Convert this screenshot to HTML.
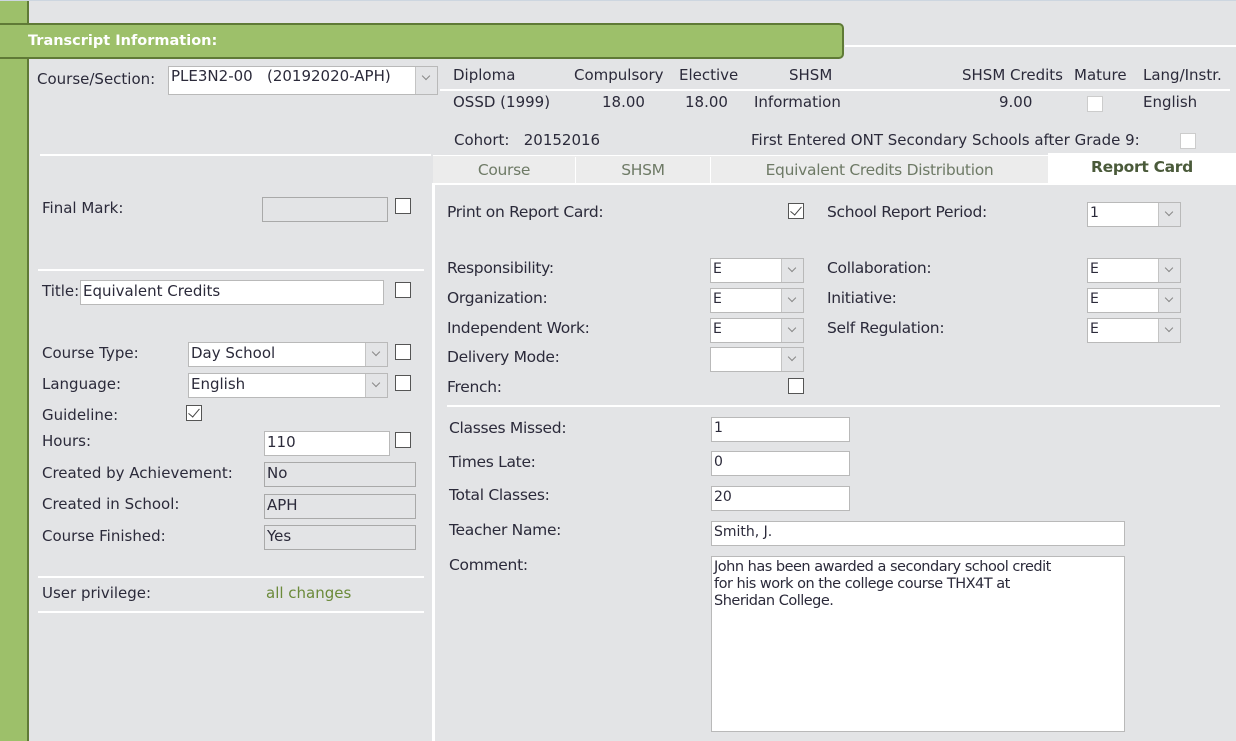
<!DOCTYPE html>
<html><head><meta charset="utf-8"><style>
*{box-sizing:border-box;margin:0;padding:0}
body{width:1236px;height:741px;overflow:hidden;background:#e3e4e6;font-family:"DejaVu Sans","Liberation Sans",sans-serif;font-size:15px;color:#2b2a3a;position:relative}
.a{position:absolute;white-space:nowrap;line-height:18px}
.in{position:absolute;background:#fff;border:1px solid #b9b9b9;font-size:14px;line-height:20px;padding-left:2px;white-space:nowrap;overflow:hidden}
.ro{background:#e3e4e6;border:1px solid #a9a9a9}
.sel .btn{position:absolute;right:0;top:0;bottom:0;width:22px;background:#e3e4e6;border-left:1px solid #c4c4c4}
.sel .btn:after{content:"";position:absolute;left:7px;top:6px;width:5px;height:5px;border-right:1px solid #888;border-bottom:1px solid #888;transform:rotate(45deg)}
.cb{position:absolute;width:16px;height:16px;background:#fff;border:1px solid #555}
.cb.l{border-color:#ccc}
.cb.k:after{content:"";position:absolute;left:4px;top:0px;width:5px;height:10px;border-right:1.5px solid #444;border-bottom:1.5px solid #444;transform:rotate(40deg)}
.hl{position:absolute;height:2px;background:#fff}
.r{font-size:15.5px;letter-spacing:-0.3px}
</style></head><body>
<div style="position:absolute;left:0;top:0;width:29px;height:741px;background:#9dc06a;border-right:2px solid #5f7a36"></div>
<div style="position:absolute;left:0;top:0;width:1236px;height:1px;background:#cdd6e0"></div>
<div style="position:absolute;left:0;top:23px;width:844px;height:36px;background:#9dc06a;border:2px solid #5f7a36;border-left:none;border-radius:0 5px 5px 0"></div>
<div class="a" style="left:28px;top:32px;color:#fff;font-weight:bold;font-size:14.5px">Transcript Information:</div>
<div class="hl" style="left:845px;top:45px;width:391px"></div>

<div class="a" style="left:37px;top:70px">Course/Section:</div>
<div class="in sel" style="left:168px;top:66px;width:270px;height:29px;line-height:18px;font-size:15px">PLE3N2-00&nbsp;&nbsp;&nbsp;(20192020-APH)<span class="btn"></span></div>

<div class="a" style="left:453px;top:66px">Diploma</div>
<div class="a" style="left:574px;top:66px">Compulsory</div>
<div class="a" style="left:679px;top:66px">Elective</div>
<div class="a" style="left:789px;top:66px">SHSM</div>
<div class="a" style="left:962px;top:66px">SHSM Credits</div>
<div class="a" style="left:1074px;top:66px">Mature</div>
<div class="a" style="left:1143px;top:66px">Lang/Instr.</div>
<div class="hl" style="left:440px;top:89px;width:790px"></div>
<div class="a" style="left:453px;top:93px">OSSD (1999)</div>
<div class="a" style="left:602px;top:93px">18.00</div>
<div class="a" style="left:685px;top:93px">18.00</div>
<div class="a" style="left:754px;top:93px">Information</div>
<div class="a" style="left:999px;top:93px">9.00</div>
<div class="cb l" style="left:1087px;top:96px"></div>
<div class="a" style="left:1143px;top:93px">English</div>
<div class="a" style="left:454px;top:131px">Cohort:&nbsp;&nbsp;&nbsp;20152016</div>
<div class="a" style="left:751px;top:131px">First Entered ONT Secondary Schools after Grade 9:</div>
<div class="cb l" style="left:1180px;top:133px"></div>

<div class="hl" style="left:40px;top:154px;width:391px"></div>
<div class="a" style="left:42px;top:199px">Final Mark:</div>
<div class="in ro" style="left:262px;top:197px;width:126px;height:25px"></div>
<div class="cb" style="left:395px;top:198px"></div>
<div class="hl" style="left:38px;top:269px;width:386px"></div>
<div class="a" style="left:42px;top:282px">Title:</div>
<div class="in" style="left:80px;top:280px;width:304px;height:25px;font-size:15px">Equivalent Credits</div>
<div class="cb" style="left:395px;top:282px"></div>
<div class="a" style="left:42px;top:344px">Course Type:</div>
<div class="in sel" style="left:188px;top:342px;width:200px;height:25px;font-size:15px">Day School<span class="btn"></span></div>
<div class="cb" style="left:395px;top:344px"></div>
<div class="a" style="left:42px;top:375px">Language:</div>
<div class="in sel" style="left:188px;top:373px;width:200px;height:25px;font-size:15px">English<span class="btn"></span></div>
<div class="cb" style="left:395px;top:375px"></div>
<div class="a" style="left:42px;top:406px">Guideline:</div>
<div class="cb k" style="left:186px;top:405px"></div>
<div class="a" style="left:42px;top:432px">Hours:</div>
<div class="in" style="left:264px;top:431px;width:126px;height:25px;font-size:15px">110</div>
<div class="cb" style="left:395px;top:432px"></div>
<div class="a" style="left:42px;top:464px">Created by Achievement:</div>
<div class="in ro" style="left:264px;top:462px;width:152px;height:25px;font-size:15px">No</div>
<div class="a" style="left:42px;top:495px">Created in School:</div>
<div class="in ro" style="left:264px;top:494px;width:152px;height:25px;font-size:15px">APH</div>
<div class="a" style="left:42px;top:527px">Course Finished:</div>
<div class="in ro" style="left:264px;top:525px;width:152px;height:25px;font-size:15px">Yes</div>
<div class="hl" style="left:38px;top:576px;width:386px"></div>
<div class="a" style="left:42px;top:584px">User privilege:</div>
<div class="a" style="left:266px;top:584px;color:#6b8a3a">all changes</div>
<div class="hl" style="left:38px;top:611px;width:386px"></div>

<div style="position:absolute;left:433px;top:155px;width:615px;height:28px;background:#ececec;border-top:1px solid #fff"></div>
<div style="position:absolute;left:575px;top:157px;width:1px;height:26px;background:#fff"></div>
<div style="position:absolute;left:710px;top:157px;width:1px;height:26px;background:#fff"></div>
<div style="position:absolute;left:1048px;top:153px;width:188px;height:32px;background:#fff"></div>
<div class="a r" style="left:433px;top:161px;width:142px;text-align:center;color:#6e7a66">Course</div>
<div class="a r" style="left:576px;top:161px;width:134px;text-align:center;color:#6e7a66">SHSM</div>
<div class="a r" style="left:711px;top:161px;width:337px;text-align:center;color:#6e7a66">Equivalent Credits Distribution</div>
<div class="a r" style="left:1048px;top:158px;width:188px;text-align:center;color:#4a5a3a;font-weight:bold">Report Card</div>

<div style="position:absolute;left:432px;top:183px;width:804px;height:558px;background:#e3e4e6;border-left:3px solid #fff;border-top:2px solid #fff"></div>
<div class="a r" style="left:447px;top:203px">Print on Report Card:</div>
<div class="cb k" style="left:788px;top:203px"></div>
<div class="a r" style="left:827px;top:203px">School Report Period:</div>
<div class="in sel" style="left:1087px;top:202px;width:94px;height:25px">1<span class="btn"></span></div>

<div class="a r" style="left:447px;top:259px">Responsibility:</div>
<div class="in sel" style="left:710px;top:258px;width:94px;height:25px">E<span class="btn"></span></div>
<div class="a r" style="left:827px;top:259px">Collaboration:</div>
<div class="in sel" style="left:1087px;top:258px;width:94px;height:25px">E<span class="btn"></span></div>
<div class="a r" style="left:447px;top:289px">Organization:</div>
<div class="in sel" style="left:710px;top:288px;width:94px;height:25px">E<span class="btn"></span></div>
<div class="a r" style="left:827px;top:289px">Initiative:</div>
<div class="in sel" style="left:1087px;top:288px;width:94px;height:25px">E<span class="btn"></span></div>
<div class="a r" style="left:447px;top:319px">Independent Work:</div>
<div class="in sel" style="left:710px;top:318px;width:94px;height:25px">E<span class="btn"></span></div>
<div class="a r" style="left:827px;top:319px">Self Regulation:</div>
<div class="in sel" style="left:1087px;top:318px;width:94px;height:25px">E<span class="btn"></span></div>
<div class="a r" style="left:447px;top:348px">Delivery Mode:</div>
<div class="in sel" style="left:710px;top:347px;width:94px;height:25px"><span class="btn"></span></div>
<div class="a r" style="left:447px;top:378px">French:</div>
<div class="cb" style="left:788px;top:378px"></div>
<div class="hl" style="left:447px;top:405px;width:773px"></div>

<div class="a r" style="left:449px;top:419px">Classes Missed:</div>
<div class="in" style="left:711px;top:417px;width:139px;height:25px">1</div>
<div class="a r" style="left:449px;top:453px">Times Late:</div>
<div class="in" style="left:711px;top:451px;width:139px;height:25px">0</div>
<div class="a r" style="left:449px;top:486px">Total Classes:</div>
<div class="in" style="left:711px;top:486px;width:139px;height:25px">20</div>
<div class="a r" style="left:449px;top:521px">Teacher Name:</div>
<div class="in" style="left:711px;top:521px;width:414px;height:25px">Smith, J.</div>
<div class="a r" style="left:449px;top:556px">Comment:</div>
<div class="in" style="left:711px;top:556px;width:414px;height:176px;white-space:nowrap;line-height:17px;padding-top:2px;font-size:14.5px;letter-spacing:-0.5px">John has been awarded a secondary school credit<br>for his work on the college course THX4T at<br>Sheridan College.</div>
</body></html>
